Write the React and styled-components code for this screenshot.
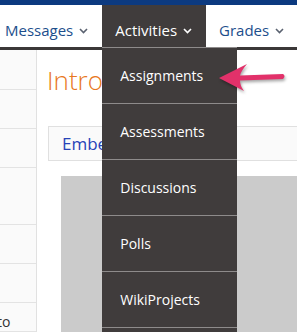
import React from 'react';
import styled, { createGlobalStyle } from 'styled-components';

const GlobalStyle = createGlobalStyle`
	html, body {
		margin: 0;
		padding: 0;
		background: #fff;
		font-family: 'Open Sans', 'Liberation Sans', sans-serif;
		overflow: hidden;
	}
`;

const Page = styled.div`
	position: relative;
	width: 297px;
	height: 332px;
	overflow: hidden;
`;

const TopStrip = styled.div`
	height: 5px;
	background: #0c3a80;
`;

const NavBar = styled.nav`
	display: flex;
	height: 42px;
	border-bottom: 3px solid #3b3838;
	margin-left: -8px;
`;

const NavItem = styled.div`
	position: relative;
	display: flex;
	align-items: center;
	height: 42px;
	padding: 8px 14px 0 13px;
	box-sizing: border-box;
	font-size: 15px;
	white-space: nowrap;
	color: ${(p) => (p.active ? '#ffffff' : '#1c4e8c')};
	background: ${(p) => (p.active ? '#403c3c' : 'transparent')};
	svg {
		margin-left: 6px;
		margin-top: 2px;
	}
`;

const Dropdown = styled.ul`
	position: absolute;
	top: 42px;
	left: 0;
	width: 135px;
	margin: 0;
	padding: 0;
	list-style: none;
	background: #403c3c;
	z-index: 5;
`;

const DropItem = styled.li`
	height: 55px;
	border-top: 1px solid #8e8b8b;
	display: flex;
	align-items: center;
	padding-left: 18px;
	font-size: 14px;
	color: #ffffff;
`;

const Main = styled.div`
	display: flex;
	height: 282px;
`;

const Sidebar = styled.aside`
	width: 36px;
	flex: none;
	background: #fafafa;
	border-right: 1px solid #e1e1e1;
	overflow: hidden;
`;

const SideRow = styled.div`
	height: ${(p) => p.h}px;
	box-sizing: border-box;
	border-bottom: 1px solid #e3e3e3;
	font-size: 14px;
	color: #333;
	display: flex;
	align-items: flex-end;
	text-indent: -3px;
`;

const Content = styled.section`
	flex: 1;
	padding-left: 10px;
	overflow: hidden;
`;

const Title = styled.h1`
	margin: 12px 0 0;
	font-size: 26px;
	font-weight: 300;
	line-height: 36px;
	color: #e87722;
	white-space: nowrap;
`;

const EmbedBox = styled.div`
	margin: 28px 0 0 1px;
	height: 35px;
	box-sizing: border-box;
	border: 1px solid #e0e0e0;
	border-right: none;
	background: #fafafa;
	display: flex;
	align-items: center;
	padding-left: 13px;
	font-size: 17px;
	color: #2743b8;
	white-space: nowrap;
`;

const Preview = styled.div`
	margin: 15px 0 0 14px;
	height: 160px;
	background: #cbcbcb;
`;

const Pointer = styled.svg`
	position: absolute;
	left: 210px;
	top: 55px;
	filter: drop-shadow(1px 2px 1.5px rgba(0, 0, 0, 0.35));
	z-index: 6;
`;

const Chevron = ({ color }) => (
	<svg width="9" height="6" viewBox="0 0 9 6">
		<path d="M1 1 L4.5 4.5 L8 1" fill="none" stroke={color} strokeWidth="1.6" />
	</svg>
);

const menu = ['Assignments', 'Assessments', 'Discussions', 'Polls', 'WikiProjects', 'More'];

const App = () => (
	<Page>
		<GlobalStyle />
		<TopStrip />
		<NavBar>
			<NavItem>
				Messages <Chevron color="#5a6270" />
			</NavItem>
			<NavItem active>
				Activities <Chevron color="#ffffff" />
				<Dropdown>
					{menu.map((m) => (
						<DropItem key={m}>{m}</DropItem>
					))}
				</Dropdown>
			</NavItem>
			<NavItem>
				Grades <Chevron color="#5a6270" />
			</NavItem>
		</NavBar>
		<Main>
			<Sidebar>
				<SideRow h={40} />
				<SideRow h={39} />
				<SideRow h={39} />
				<SideRow h={57} />
				<SideRow h={39} />
				<SideRow h={39} />
				<SideRow h={29}>to</SideRow>
			</Sidebar>
			<Content>
				<Title>Introduction</Title>
				<EmbedBox>Embedded Content</EmbedBox>
				<Preview />
			</Content>
		</Main>
		<Pointer width="85" height="45" viewBox="0 0 85 45">
			<path
				d="M9 23 L37 9 Q31 16 30 20.5 L73 19 Q76 21 73 24 L30 25.5 Q30 31 34 36 Z"
				fill="#e2316a"
			/>
		</Pointer>
	</Page>
);

export default App;
